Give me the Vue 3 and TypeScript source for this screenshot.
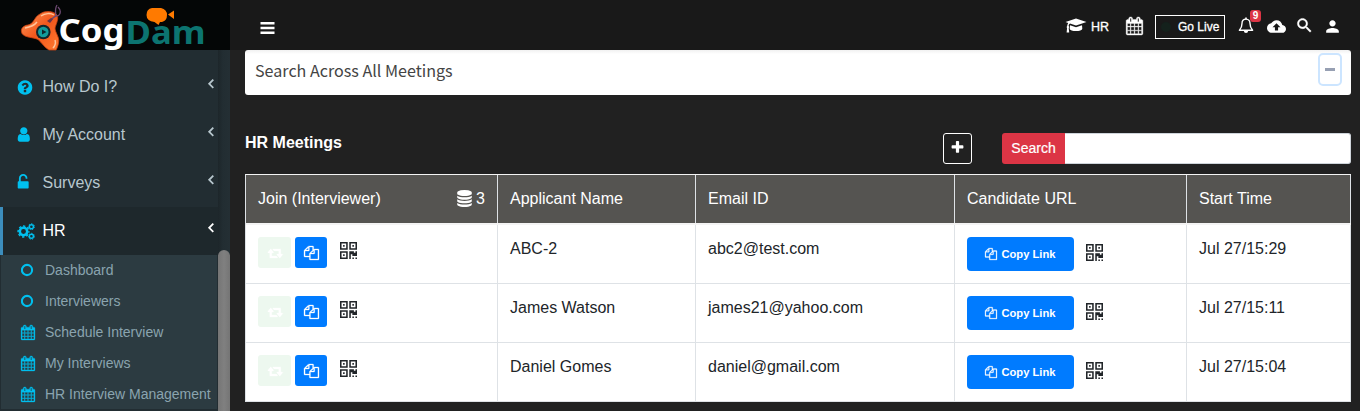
<script setup lang="ts">
interface MenuItem {
  label: string
  icon: string
  active?: boolean
}

interface Meeting {
  name: string
  email: string
  start: string
}

const icons: Record<string, string> = {
  question:
    'M1024 1376v-192q0-14-9-23t-23-9h-192q-14 0-23 9t-9 23v192q0 14 9 23t23 9h192q14 0 23-9t9-23zm256-672q0-88-55.5-163t-138.5-116-170-41q-243 0-371 213-15 24 8 42l132 100q7 6 19 6 16 0 25-12 53-68 86-92 34-24 86-24 48 0 85.5 26t37.5 59q0 38-20 61t-68 45q-63 28-115.5 86.5t-52.5 125.5v36q0 14 9 23t23 9h192q14 0 23-9t9-23q0-19 21.5-49.5t54.5-49.5q32-18 49-28.5t46-35 44.5-48 28-60.5 12.5-81zm384 192q0 209-103 385.5t-279.5 279.5-385.5 103-385.5-103-279.5-279.5-103-385.5 103-385.5 279.5-279.5 385.5-103 385.5 103 279.5 279.5 103 385.5z',
  user: 'M1408 1399q0 109-62.5 187t-150.5 78h-854q-88 0-150.5-78t-62.5-187q0-85 8.5-160.5t31.5-152 58.5-131 94-89 134.5-34.5q131 128 313 128t313-128q76 0 134.5 34.5t94 89 58.5 131 31.5 152 8.5 160.5zm-256-887q0 159-112.5 271.5t-271.5 112.5-271.5-112.5-112.5-271.5 112.5-271.5 271.5-112.5 271.5 112.5 112.5 271.5z',
  unlock:
    'M1184 768q40 0 68 28t28 68v576q0 40-28 68t-68 28h-960q-40 0-68-28t-28-68v-576q0-40 28-68t68-28h32v-320q0-185 131.5-316.5t316.5-131.5 316.5 131.5 131.5 316.5q0 26-19 45t-45 19h-64q-26 0-45-19t-19-45q0-106-75-181t-181-75-181 75-75 181v320h736z',
  calendar:
    'M192 1664h288v-288h-288v288zm352 0h320v-288h-320v288zm-352-352h288v-320h-288v320zm352 0h320v-320h-320v320zm-352-384h288v-288h-288v288zm736 736h320v-288h-320v288zm-384-736h320v-288h-320v288zm768 736h288v-288h-288v288zm-384-352h320v-320h-320v320zm-352-864v-288q0-13-9.5-22.5t-22.5-9.5h-64q-13 0-22.5 9.5t-9.5 22.5v288q0 13 9.5 22.5t22.5 9.5h64q13 0 22.5-9.5t9.5-22.5zm736 864h288v-320h-288v320zm-384-384h320v-288h-320v288zm384 0h288v-288h-288v288zm32-480v-288q0-13-9.5-22.5t-22.5-9.5h-64q-13 0-22.5 9.5t-9.5 22.5v288q0 13 9.5 22.5t22.5 9.5h64q13 0 22.5-9.5t9.5-22.5zm384-64v1280q0 52-38 90t-90 38h-1408q-52 0-90-38t-38-90v-1280q0-52 38-90t90-38h128v-96q0-66 47-113t113-47h64q66 0 113 47t47 113v96h384v-96q0-66 47-113t113-47h64q66 0 113 47t47 113v96h128q52 0 90 38t38 90z',
  retweet:
    'M1344 1504q0 13-9.5 22.5t-22.5 9.5h-960q-8 0-13.5-2t-9-7-5.5-8-3-11.5-1-11.5v-600h-192q-26 0-45-19t-19-45q0-24 15-41l320-384q19-22 49-22t49 22l320 384q15 17 15 41 0 26-19 45t-45 19h-192v384h576q16 0 25 11l160 192q7 10 7 21zm640-416q0 24-15 41l-320 384q-20 23-49 23t-49-23l-320-384q-15-17-15-41 0-26 19-45t45-19h192v-384h-576q-16 0-25-12l-160-192q-7-9-7-20 0-13 9.5-22.5t22.5-9.5h960q8 0 13.5 2t9 7 5.5 8 3 11.500 1 11.500v600h192q26 0 45 19t19 45z',
  copy: 'M1696 384q40 0 68 28t28 68v1216q0 40-28 68t-68 28h-960q-40 0-68-28t-28-68v-288h-544q-40 0-68-28t-28-68v-672q0-40 20-88t48-76l408-408q28-28 76-48t88-20h416q40 0 68 28t28 68v328q68-40 128-40h416zm-544 213l-299 299h299v-299zm-640-384l-299 299h299v-299zm196 647l316-316v-416h-384v416q0 40-28 68t-68 28h-416v640h512v-256q0-40 20-88t48-76zm956 804v-1152h-384v416q0 40-28 68t-68 28h-416v640h896z',
  plus: 'M1600 736v192q0 40-28 68t-68 28h-416v416q0 40-28 68t-68 28h-192q-40 0-68-28t-28-68v-416h-416q-40 0-68-28t-28-68v-192q0-40 28-68t68-28h416v-416q0-40 28-68t68-28h192q40 0 68 28t28 68v416h416q40 0 68 28t28 68z',
  database:
    'M896 768q237 0 443-43t325-127v170q0 69-103 128t-280 93.5-385 34.5-385-34.5-280-93.5-103-128v-170q119 84 325 127t443 43zm0 768q237 0 443-43t325-127v170q0 69-103 128t-280 93.5-385 34.5-385-34.5-280-93.5-103-128v-170q119 84 325 127t443 43zm0-384q237 0 443-43t325-127v170q0 69-103 128t-280 93.5-385 34.5-385-34.5-280-93.5-103-128v-170q119 84 325 127t443 43zm0-1152q208 0 385 34.5t280 93.5 103 128v128q0 69-103 128t-280 93.5-385 34.5-385-34.5-280-93.5-103-128v-128q0-69 103-128t280-93.5 385-34.5z',
  qr: 'M384 1152v128h-128v-128h128zm0-768v128h-128v-128h128zm768 0v128h-128v-128h128zm-1024 1023h384v-383h-384v383zm0-767h384v-384h-384v384zm768 0h384v-384h-384v384zm-256 256v640h-640v-640h640zm512 512v128h-128v-128h128zm256 0v128h-128v-128h128zm0-512v384h-384v-128h-128v384h-128v-640h384v128h128v-128h128zm-768-768v640h-640v-640h640zm768 0v640h-640v-640h640z',
}

const menu: MenuItem[] = [
  { label: 'How Do I?', icon: 'question' },
  { label: 'My Account', icon: 'user' },
  { label: 'Surveys', icon: 'unlock' },
  { label: 'HR', icon: 'cogs', active: true },
]

const submenu: MenuItem[] = [
  { label: 'Dashboard', icon: 'circle' },
  { label: 'Interviewers', icon: 'circle' },
  { label: 'Schedule Interview', icon: 'calendar' },
  { label: 'My Interviews', icon: 'calendar' },
  { label: 'HR Interview Management', icon: 'calendar' },
]

const meetings: Meeting[] = [
  { name: 'ABC-2', email: 'abc2@test.com', start: 'Jul 27/15:29' },
  { name: 'James Watson', email: 'james21@yahoo.com', start: 'Jul 27/15:11' },
  { name: 'Daniel Gomes', email: 'daniel@gmail.com', start: 'Jul 27/15:04' },
]
</script>

<template>
  <div class="app">
    <aside class="sidebar">
      <div class="logo">
        <svg class="brand" width="230" height="50" viewBox="0 0 230 50">
          <defs>
            <linearGradient id="flame" x1="0" y1="0" x2="1" y2="1">
              <stop offset="0" stop-color="#ff9a5c" />
              <stop offset=".5" stop-color="#f2571c" />
              <stop offset="1" stop-color="#ff7a30" />
            </linearGradient>
          </defs>
          <path
            d="M40 14C45 10 54 11 57 15C59 19 56 24 55 28C55 33 60 37 58.500 43C58 46 57 48.500 56 50H49C45 48 42 43 38 39.500C33 37 25 38 22 33.500C20 29 23 25.500 28 25C34 24 34 17 40 14Z"
            fill="url(#flame)" stroke="#c9400f" stroke-width=".8"
          />
          <path d="M41 16C45 13 51 13 54 15M25 28C31 27 34 26 37 22M55 40C56 43 55 46 53 48" fill="none" stroke="#ffc49c" stroke-width="1.500" />
          <path d="M57 5C54.500 9 55.500 12 56 16M58 7C61 10 61 14 58.500 15.500C54 16 52 18 50 22" fill="none" stroke="#6d4a72" stroke-width="1.300" />
          <path d="M47 21l4-3 2 1-3 4z" fill="#6b3345" />
          <circle cx="43.300" cy="32" r="7.300" fill="#14262b" />
          <circle cx="43.300" cy="32" r="5.300" fill="#149c9c" />
          <path d="M42 29.500v5l4.500-2.500z" fill="#10252a" />
          <text class="logo-cog" x="58.500" y="41.500" textLength="66" lengthAdjust="spacingAndGlyphs">Cog</text>
          <text class="logo-dam" x="125.500" y="43.500" textLength="80" lengthAdjust="spacingAndGlyphs">Dam</text>
          <path d="M152 8h9q6 1.500 6 7t-5 7h-2l-1.500 3-4-3q-8-1-8-7t5.500-7zM168 14.500l6-4v8.500z" fill="#ff7a00" />
        </svg>
      </div>
      <nav class="menu">
        <div v-for="item in menu" :key="item.label" class="menu-item" :class="{ active: item.active }">
          <span class="menu-icon">
            <svg v-if="item.icon === 'cogs'" width="19" height="17" viewBox="0 0 19 17">
              <g fill="none" stroke="currentColor">
                <circle cx="6.500" cy="8.500" r="3.700" stroke-width="2.500" />
                <circle cx="6.500" cy="8.500" r="5.400" stroke-width="1.500" stroke-dasharray="2.300 1.941" stroke-dashoffset="1.100" />
                <circle cx="14.400" cy="3.700" r="2" stroke-width="1.400" />
                <circle cx="14.400" cy="3.700" r="3" stroke-width="1" stroke-dasharray="1.350 1.343" />
                <circle cx="14.400" cy="13.300" r="2" stroke-width="1.400" />
                <circle cx="14.400" cy="13.300" r="3" stroke-width="1" stroke-dasharray="1.350 1.343" />
              </g>
            </svg>
            <svg v-else class="fa" viewBox="64 0 1664 1792" :class="item.icon"><path :d="icons[item.icon]" /></svg>
          </span>
          <span class="menu-label">{{ item.label }}</span>
          <svg class="angle" width="8" height="12" viewBox="0 0 8 12"><path d="M6.300 1.700L2.200 5.800l4.100 4.100" /></svg>
        </div>
      </nav>
      <div class="submenu">
        <div v-for="item in submenu" :key="item.label" class="sub-item">
          <span class="sub-icon">
            <svg v-if="item.icon === 'circle'" width="14" height="14" viewBox="0 0 14 14">
              <circle cx="6" cy="7" r="5.100" fill="none" stroke="currentColor" stroke-width="2.100" />
            </svg>
            <svg v-else class="heavy" width="14" height="15" viewBox="64 0 1664 1792"><path :d="icons.calendar" /></svg>
          </span>
          <span>{{ item.label }}</span>
        </div>
      </div>
      <div class="scroll-track"><div class="scroll-thumb"></div></div>
    </aside>

    <div class="page">
      <header class="topbar">
        <svg class="bars" width="15" height="12" viewBox="0 0 15 12">
          <path d="M.5 0h14v2.600H.5zM.5 4.700h14v2.600H.5zM.5 9.400h14V12H.5z" />
        </svg>
        <div class="actions">
          <svg class="cap" width="22" height="16" viewBox="0 0 22 16">
            <path d="M11 .5l10.500 3.500L11 7.500 5 5.500c-.9.6-1.300 1.400-1.400 2.600.7.500.7 1.400.1 2l.5 4.400H1.600l.5-4.400c-.6-.6-.5-1.500.1-2 .1-1.400.4-2.300 1-3.200L.5 4z" />
            <path d="M5 7.200L11 9.200l6-2 .3 3.200c.1 3.500-12.700 3.500-12.600 0z" />
          </svg>
          <span class="hr">HR</span>
          <svg class="cal heavy" width="17" height="18" viewBox="64 0 1664 1792"><path :d="icons.calendar" /></svg>
          <button class="go-live"><i class="dot"></i>Go Live</button>
          <span class="bell">
            <svg width="16" height="17" viewBox="0 0 16 17">
              <path d="M8 2.100C5.300 2.100 4 4.300 4 6.500 4 10 3 11.600 1.400 13.200h13.200C13 11.600 12 10 12 6.500 12 4.300 10.700 2.100 8 2.100z" fill="none" stroke="#fff" stroke-width="1.400" stroke-linejoin="round" />
              <path d="M7.200.4h1.600v2H7.200zM5.900 14h4.200a2.100 2.100 0 0 1-4.200 0z" />
            </svg>
            <b class="badge">9</b>
          </span>
          <svg class="cloud" width="19" height="19" viewBox="0 0 24 24">
            <path d="M19.350 10.040C18.670 6.590 15.640 4 12 4 9.110 4 6.600 5.640 5.350 8.040 2.340 8.360 0 10.910 0 14c0 3.310 2.690 6 6 6h13c2.760 0 5-2.240 5-5 0-2.640-2.050-4.780-4.650-4.960zM14 13v4h-4v-4H7l5-5 5 5h-3z" />
          </svg>
          <svg class="search-icon" width="19" height="19" viewBox="0 0 24 24">
            <path d="M15.500 14h-.79l-.28-.27C15.410 12.590 16 11.110 16 9.500 16 5.910 13.090 3 9.500 3S3 5.910 3 9.500 5.910 16 9.500 16c1.610 0 3.090-.59 4.230-1.570l.27.28v.79l5 4.990L20.490 19l-4.990-5zm-6 0C7.010 14 5 11.990 5 9.500S7.010 5 9.500 5 14 7.010 14 9.500 11.990 14 9.500 14z" stroke="#fff" stroke-width=".5" />
          </svg>
          <svg class="person" width="19" height="19" viewBox="0 0 24 24">
            <path d="M12 12c2.210 0 4-1.790 4-4s-1.790-4-4-4-4 1.790-4 4 1.790 4 4 4zm0 2c-2.670 0-8 1.340-8 4v2h16v-2c0-2.660-5.330-4-8-4z" />
          </svg>
        </div>
      </header>

      <main class="content">
        <section class="search-card">
          <span class="search-title">Search Across All Meetings</span>
          <button class="collapse" aria-label="Collapse"><i></i></button>
        </section>

        <div class="toolbar">
          <h1>HR Meetings</h1>
          <button class="add" aria-label="Add">
            <svg width="15" height="15" viewBox="0 0 1792 1792"><path :d="icons.plus" /></svg>
          </button>
          <div class="search-group">
            <button>Search</button>
            <input type="text" aria-label="Search meetings" />
          </div>
        </div>

        <div class="table">
          <div class="row head">
            <div class="cell first">
              <span>Join (Interviewer)</span>
              <span class="count">
                <svg width="15" height="17" viewBox="128 0 1536 1792"><path :d="icons.database" /></svg>3
              </span>
            </div>
            <div class="cell">Applicant Name</div>
            <div class="cell">Email ID</div>
            <div class="cell">Candidate URL</div>
            <div class="cell">Start Time</div>
          </div>
          <div v-for="m in meetings" :key="m.name" class="row">
            <div class="cell join">
              <span class="btn rejoin"><svg class="heavy" width="16" height="14" viewBox="0 0 1984 1792"><path :d="icons.retweet" /></svg></span>
              <span class="btn copy"><svg class="heavy" width="15" height="14" viewBox="0 0 1792 1792" preserveAspectRatio="none"><path :d="icons.copy" /></svg></span>
              <svg class="qr" width="17" height="17" viewBox="0 128 1408 1408"><path :d="icons.qr" /></svg>
            </div>
            <div class="cell">{{ m.name }}</div>
            <div class="cell">{{ m.email }}</div>
            <div class="cell url">
              <button class="copy-link">
                <svg class="heavy" width="12" height="12" viewBox="0 0 1792 1792"><path :d="icons.copy" /></svg>Copy Link
              </button>
              <svg class="qr" width="17" height="17" viewBox="0 128 1408 1408"><path :d="icons.qr" /></svg>
            </div>
            <div class="cell">{{ m.start }}</div>
          </div>
        </div>
      </main>
    </div>
  </div>
</template>

<style>
body {
  margin: 0;
  background: #212121;
}
</style>

<style scoped>
.app {
  display: flex;
  width: 1360px;
  height: 411px;
  overflow: hidden;
  background: #212121;
  font-family: "Liberation Sans", Arial, sans-serif;
  font-size: 16px;
  line-height: 24px;
}
.app * {
  box-sizing: border-box;
}
svg {
  display: block;
  flex: none;
  fill: currentColor;
}
.brand {
  overflow: visible;
}
.heavy {
  overflow: visible;
}
.heavy path {
  stroke: currentColor;
  stroke-width: 36px;
}
button {
  font-family: inherit;
}

/* Sidebar */
.sidebar {
  position: relative;
  flex: none;
  width: 230px;
  height: 411px;
  background: #222d32;
}
.logo {
  height: 50px;
  background: #040606;
}
.logo-cog {
  font: 700 33px "Noto Sans", sans-serif;
  fill: #fff;
}
.logo-dam {
  font: 700 32px "Noto Sans", sans-serif;
  fill: #0c7470;
}
.menu {
  width: 218px;
  padding-top: 13px;
}
.menu-item {
  display: flex;
  align-items: center;
  height: 48px;
  padding: 0 3px 0 14px;
  border-left: 3px solid transparent;
  color: #b8c7ce;
}
.menu-item.active {
  border-left-color: #3c8dbc;
  background: #1e282c;
  color: #fff;
}
.menu-icon {
  width: 25.5px;
  color: #00c0ef;
}
.fa {
  width: 16px;
  height: 17px;
}
.menu-icon .user,
.menu-icon .unlock {
  margin-top: -1px;
}
.menu-label {
  flex: 1;
}
.angle {
  margin-bottom: 6px;
}
.angle path {
  fill: none;
  stroke: currentColor;
  stroke-width: 1.8;
}
.submenu {
  width: 216px;
  height: 154px;
  margin-left: 1px;
  background: #2c3b41;
}
.sub-item {
  display: flex;
  align-items: center;
  height: 31px;
  padding: 0 0 1px 20px;
  font-size: 14px;
  color: #8aa4af;
  white-space: nowrap;
}
.sub-icon {
  width: 24px;
  color: #00c0ef;
}
.scroll-track {
  position: absolute;
  top: 50px;
  right: 0;
  width: 12px;
  height: 361px;
  padding-top: 200px;
  background: linear-gradient(90deg, #1d262a, #222d32 40%, #242f34);
}
.scroll-thumb {
  height: 175px;
  border-radius: 6px;
  background: linear-gradient(90deg, #757575, #808080 50%, #757575);
}

/* Top bar */
.page {
  flex: 1;
}
.topbar {
  display: flex;
  justify-content: space-between;
  height: 50px;
  padding-right: 18px;
  background: #191919;
  color: #fff;
}
.bars {
  margin: 22px 0 0 30px;
}
.actions {
  display: flex;
  align-items: center;
  height: 53px;
}
.cap {
  margin-top: -2px;
}
.hr {
  margin: 0 17px 0 4px;
  font-size: 12.5px;
  -webkit-text-stroke: 0.3px #fff;
}
.cal {
  margin: -2px 12px 0 0;
}
.go-live {
  display: flex;
  align-items: center;
  width: 70px;
  height: 24px;
  margin-right: 13px;
  padding: 0 0 0 5px;
  border: 1px solid #fff;
  background: transparent;
  color: #fff;
  font-size: 12px;
  white-space: nowrap;
  -webkit-text-stroke: 0.3px #fff;
}
.dot {
  width: 10px;
  height: 10px;
  margin-right: 7px;
  border-radius: 50%;
  background: #14211c;
}
.bell {
  position: relative;
  margin: -2px 13px 0 0;
}
.badge {
  position: absolute;
  top: -7px;
  left: 12px;
  width: 11px;
  height: 12px;
  border-radius: 3px;
  background: #dc3545;
  font-size: 10px;
  line-height: 12px;
  text-align: center;
}
.cloud {
  margin-right: 9px;
}
.search-icon {
  margin: -2px 9px 0 0;
}
.person {
  margin-top: -1px;
}

/* Content */
.content {
  padding: 0 9px 0 15px;
}
.search-card {
  display: flex;
  justify-content: space-between;
  height: 45px;
  padding: 3px 9px 0 10px;
  border-radius: 3px;
  background: linear-gradient(#f1f1f1, #fff 4px);
}
.search-title {
  margin-top: 5px;
  color: #444;
  font-family: "Noto Sans CJK SC", sans-serif;
  font-size: 16.1px;
}
.collapse {
  display: flex;
  align-items: center;
  justify-content: center;
  width: 24px;
  height: 33px;
  padding: 0;
  border: 2px solid #cce5ff;
  border-radius: 5px;
  background: #fff;
}
.collapse i {
  width: 10px;
  height: 3px;
  margin-bottom: 1px;
  background: #97a0b3;
}
.toolbar {
  display: flex;
  height: 79px;
  padding-top: 38px;
}
h1 {
  flex: 1;
  margin: -2px 0 0;
  color: #fff;
  font-size: 16px;
  font-weight: 700;
  line-height: 24px;
}
.add {
  display: flex;
  align-items: center;
  justify-content: center;
  width: 29px;
  height: 31px;
  margin-right: 30px;
  padding: 0 0 2px;
  border: 1px solid #fff;
  border-radius: 3px;
  background: transparent;
  color: #fff;
}
.search-group {
  display: flex;
  width: 349px;
  height: 31px;
}
.search-group button {
  width: 63px;
  padding: 0 0 2px;
  border: 0;
  border-radius: 3px 0 0 3px;
  background: #dc3545;
  color: #fff;
  font-size: 14px;
  -webkit-text-stroke: 0.2px #fff;
}
.search-group input {
  flex: 1;
  min-width: 0;
  border: 1px solid #ced4da;
  border-left: 0;
  border-radius: 0 3px 3px 0;
  background: #fff;
}

/* Table */
.table {
  width: 1106px;
  border-top: 1px solid #f4f4f4;
  border-left: 1px solid #dee2e6;
  background: #fff;
  color: #212529;
}
.row {
  display: grid;
  grid-template-columns: 252px 198px 259px 232px 164px;
  height: 59px;
  border-bottom: 1px solid #dee2e6;
}
.row.head {
  height: 50px;
  border-bottom: 2px solid #f4f4f4;
  background: #555451;
  color: #fff;
}
.cell {
  padding: 12px 12px 0;
  border-right: 1px solid #dee2e6;
}
.first {
  display: flex;
  justify-content: space-between;
}
.count {
  display: flex;
  align-items: flex-start;
  gap: 4px;
}
.count svg {
  margin-top: 3px;
}
.join,
.url {
  display: flex;
  align-items: flex-start;
}
.btn {
  display: flex;
  align-items: center;
  justify-content: center;
  height: 31px;
  border-radius: 3px;
  color: #fff;
}
.rejoin {
  width: 33px;
  margin-right: 4px;
  background: #edf8ef;
}
.copy {
  width: 32px;
  background: #007bff;
}
.join .qr {
  margin: 5px 0 0 13px;
}
.copy-link {
  display: flex;
  align-items: center;
  justify-content: center;
  gap: 4px;
  width: 107px;
  height: 34px;
  padding: 0;
  border: 0;
  border-radius: 4px;
  background: #007bff;
  color: #fff;
  font-size: 11.2px;
  font-weight: 700;
}
.url .qr {
  margin: 7px 0 0 12px;
}
</style>
